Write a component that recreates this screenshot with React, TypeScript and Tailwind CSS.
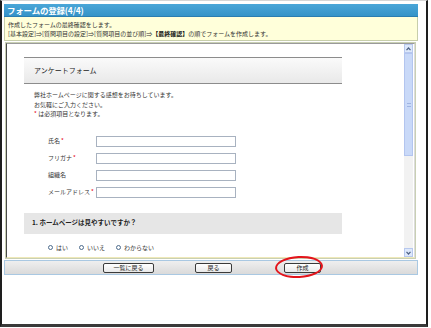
import React from "react";

const fields = [
  { label: "氏名", required: true },
  { label: "フリガナ", required: true },
  { label: "組織名", required: false },
  { label: "メールアドレス", required: true },
];

const answers = ["はい", "いいえ", "わからない"];

function Req() {
  return <span className="text-[#e60012] ml-[1px]">*</span>;
}

function Arrow({ up }: { up?: boolean }) {
  return (
    <div className="h-[9px] w-[9px] border border-[#b7c8ee] bg-[#dde8fb] flex items-center justify-center">
      <svg width="5" height="4" viewBox="0 0 5 4">
        <path
          d={up ? "M0.5 3.2 L2.5 1 L4.5 3.2" : "M0.5 0.8 L2.5 3 L4.5 0.8"}
          fill="none"
          stroke="#4d6185"
          strokeWidth="1.2"
        />
      </svg>
    </div>
  );
}

function Button({ children, width, className = "" }: { children: React.ReactNode; width: string; className?: string }) {
  return (
    <div
      className={`${width} ${className} relative h-[10px] border border-[#3a3a3a] rounded-[2px] bg-gradient-to-b from-white to-[#e9e9e9] flex items-center justify-center text-[6px] leading-none text-[#222]`}
    >
      {children}
    </div>
  );
}

export default function App() {
  return (
    <div className="w-[431px] h-[328px] bg-white overflow-hidden font-[family-name:'Noto_Sans_CJK_JP','Liberation_Sans',sans-serif] text-[#333]">
      <div className="w-[428px] h-[327px] border-t border-t-[#d6d6d6] border-l-2 border-r-2 border-b-[3px] border-l-[#1e1e1e] border-r-[#1e1e1e] border-b-[#3a3a3a] pl-[2px] pr-[8px] pt-[3px] flex flex-col">
        {/* title */}
        <div className="h-[13px] bg-gradient-to-b from-[#4aa6d8] to-[#3593c8] border-b border-[#2b7db0] text-white font-bold text-[8.5px] leading-none flex items-center pl-[3px] tracking-[-0.2px]">
          フォームの登録(4/4)
        </div>

        {/* info */}
        <div className="h-[24px] bg-[#ffffda] border border-t-0 border-[#c7ceaa] px-[3px] pt-[3px] text-[6px] leading-[9px] text-[#333]">
          <div>作成したフォームの最終確認をします。</div>
          <div>
            [基本設定]⇒[質問項目の設定]⇒[質問項目の並び順]⇒<span className="font-bold text-[#111]">【最終確認】</span>の順でフォームを作成します。
          </div>
        </div>

        {/* panel */}
        <div className="mt-[1px] ml-[1px] mr-[2px] h-[217px] border border-[#c9d0b4]">
          <div className="h-full border-l border-t border-l-[#4a4a4a] border-t-[#9a9a9a] border-b border-b-[#efe9b8] border-r border-r-[#dcdcdc] flex bg-white">
            <div className="flex-1 overflow-hidden">
              <div className="ml-[17px] w-[318px]">
                <div className="mt-[13px] h-[27px] border-t border-b border-[#8c8c8c] bg-gradient-to-b from-[#fafafa] to-[#e9e9e9] flex items-center pl-[10px] text-[7px] text-[#222]">
                  アンケートフォーム
                </div>

                <div className="mt-[6px] pl-[10px] text-[6px] leading-[9.5px] text-[#333]">
                  <div>弊社ホームページに関する感想をお待ちしています。</div>
                  <div>お気軽にご入力ください。</div>
                  <div>
                    <span className="text-[#e60012]">*</span> は必須項目となります。
                  </div>
                </div>

                <div className="mt-[17px] pl-[24px] flex flex-col gap-[6px]">
                  {fields.map((f) => (
                    <div key={f.label} className="flex items-center h-[11px]">
                      <div className="w-[48px] text-[6px] leading-none text-[#333] whitespace-nowrap">
                        {f.label}
                        {f.required ? <Req /> : null}
                      </div>
                      <div className="w-[140px] h-[11px] border border-[#a8b2c0] bg-white" />
                    </div>
                  ))}
                </div>

                <div className="mt-[15px] h-[21px] bg-[#e6e6e6] flex items-center pl-[8px] text-[6.5px] font-bold text-[#222]">
                  1. ホームページは見やすいですか？
                </div>

                <div className="mt-[9px] pl-[24px] h-[10px] flex items-center text-[6px] leading-none text-[#333]">
                  {answers.map((a, i) => (
                    <div key={a} className={`flex items-center ${i === 0 ? "w-[31px]" : i === 1 ? "w-[37px]" : ""}`}>
                      <span className="inline-block w-[5px] h-[5px] rounded-full border border-[#4d6b8c] bg-white mr-[3px]" />
                      {a}
                    </div>
                  ))}
                </div>
              </div>
            </div>

            {/* scrollbar */}
            <div className="w-[9px] mr-[1px] flex flex-col bg-[#f3f3f3]">
              <Arrow up />
              <div className="h-[103px] border border-[#b3c5ef] bg-[#c9d9f8] flex items-center justify-center">
                <div className="w-[4px] h-[4px] border-t border-b border-[#9fb4e2]" />
              </div>
              <div className="flex-1 bg-[#f2f2f2]" />
              <Arrow />
            </div>
          </div>
        </div>

        {/* button bar */}
        <div className="mt-[1px] h-[15px] border border-[#a9c8e2] bg-gradient-to-b from-[#efefef] to-[#dadada] flex items-center pl-[98px]">
          <Button width="w-[51px]">一覧に戻る</Button>
          <Button width="w-[37px]" className="ml-[41px]">戻る</Button>
          <Button width="w-[37px]" className="ml-[52px]">
            作成
            <span className="absolute left-[-10px] top-[-8px] w-[48px] h-[22px] rounded-[50%] border-2 border-[#e3141b] rotate-[-3deg]" />
          </Button>
        </div>
      </div>
    </div>
  );
}
